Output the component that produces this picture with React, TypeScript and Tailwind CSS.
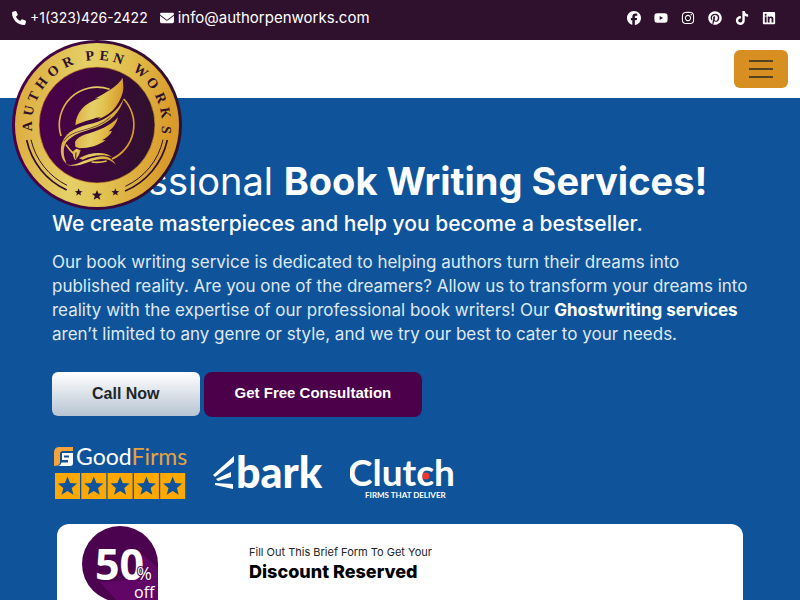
import type { IconType } from 'react-icons';
import {
  FaEnvelope,
  FaFacebook,
  FaInstagram,
  FaLinkedin,
  FaPhone,
  FaPinterest,
  FaTiktok,
  FaYoutube,
} from 'react-icons/fa6';

interface Social {
  name: string;
  icon: IconType;
}

const socials: Social[] = [
  { name: 'Facebook', icon: FaFacebook },
  { name: 'YouTube', icon: FaYoutube },
  { name: 'Instagram', icon: FaInstagram },
  { name: 'Pinterest', icon: FaPinterest },
  { name: 'TikTok', icon: FaTiktok },
  { name: 'LinkedIn', icon: FaLinkedin },
];

// letters around the seal, angle in degrees from the top
const sealLetters: [string, number][] = [
  ['A', -91], ['U', -78], ['T', -66], ['H', -53], ['O', -39], ['R', -25],
  ['P', -6], ['E', 6], ['N', 18],
  ['W', 39], ['O', 53], ['R', 67], ['K', 80], ['S', 94],
];

const STAR = 'M0 -10 L2.6 -3.4 L9.6 -3 L4.2 1.4 L6 8.2 L0 4.4 L-6 8.2 L-4.2 1.4 L-9.6 -3 L-2.6 -3.4 Z';

function SealLogo() {
  return (
    <svg viewBox="36 30 510 510" className="block h-[170px] w-[170px]" role="img" aria-label="Author Pen Works">
      <defs>
        <linearGradient id="gold" x1="0" y1="0" x2="1" y2="0.15">
          <stop offset="0" stopColor="#dca638" />
          <stop offset="0.45" stopColor="#e5d068" />
          <stop offset="0.65" stopColor="#e2c453" />
          <stop offset="1" stopColor="#d99b2b" />
        </linearGradient>
        <linearGradient id="plum" x1="0" y1="0" x2="1" y2="0">
          <stop offset="0" stopColor="#4b0049" />
          <stop offset="1" stopColor="#2f112d" />
        </linearGradient>
      </defs>
      <circle cx="291" cy="285" r="255" fill="url(#plum)" />
      <circle cx="291" cy="285" r="246" fill="url(#gold)" />
      <circle cx="291" cy="285" r="174" fill="url(#plum)" stroke="#d99b2b" strokeWidth="2" />

      <g fill="#2f112d" fontFamily="'Liberation Serif', serif" fontWeight="700" fontSize="42" textAnchor="middle">
        {sealLetters.map(([letter, angle]) => (
          <text key={angle} x="291" y="90" transform={`rotate(${angle} 291 285)`}>
            {letter}
          </text>
        ))}
      </g>

      <g fill="none" stroke="#2f112d">
        <path d="M80 330 A216 216 0 0 0 200 480" strokeWidth="5" />
        <path d="M93 329 A203 203 0 0 0 201 466" strokeWidth="3" />
        <path d="M502 330 A216 216 0 0 1 375 483" strokeWidth="5" />
        <path d="M489 329 A203 203 0 0 1 376 469" strokeWidth="3" />
      </g>
      <g fill="#2f112d">
        <path d={STAR} transform="translate(236 487) scale(1.2)" />
        <path d={STAR} transform="translate(291 496) scale(1.6)" />
        <path d={STAR} transform="translate(346 487) scale(1.2)" />
      </g>

      {/* ring, open behind the quill */}
      <path d="M329 178 A113 113 0 0 0 183 318 M198 344 A113 113 0 0 0 222 372 M275 396 A113 113 0 0 0 320 393 M336 387 A113 113 0 0 0 371 207" fill="none" stroke="url(#gold)" strokeWidth="5" />
      <g fill="url(#gold)">
        <path d="M368 143 C350 172 318 187 284 206 L300 203 C254 219 228 246 226 286 C246 274 270 271 288 263 L302 262 L293 268 C316 260 336 247 349 228 C361 211 370 190 370 172 Z" />
        <path d="M371 206 C354 240 325 266 280 280 C234 290 201 302 186 338 C178 364 184 389 200 401 C189 377 188 354 199 337 C217 312 252 304 286 293 C330 277 362 245 371 206 Z" />
        <path d="M354 262 C330 290 292 303 257 313 C241 319 230 326 225 336 L226 350 L238 355 C268 355 297 346 317 331 L306 331 C321 323 331 314 336 303 L326 304 C342 293 350 278 354 262 Z" />
        <path d="M220 363 L229 356 L242 361 L237 375 L226 391 C219 382 217 372 220 363 Z" />
        <path d="M184 379 C188 404 206 411 235 400 C267 387 308 369 332 386 C340 392 343 396 348 404 C327 383 302 383 269 395 C229 410 190 418 184 379 Z" />
        <path d="M237 385 C270 365 318 363 337 382 C307 371 276 376 248 389 Z" />
      </g>
      <path d="M191 334 C217 293 280 309 332 261" fill="none" stroke="#3c0a3a" strokeWidth="2" />
      <path d="M228 367 L227 386" stroke="#3c0a3a" strokeWidth="3" />
    </svg>
  );
}

function GoodFirmsLogo() {
  return (
    <svg viewBox="0 0 134 54" className="block h-[54px] w-[134px]" role="img" aria-label="GoodFirms, five stars">
      <path d="M5 1 H19 V5 H9 Q6 5 6 8 V17 Q5 20 0 20 V7 Q0 1 5 1 Z" fill="#f6a33a" />
      <path d="M8 7 H19 V17 Q19 20 16 20 H4 Q7 19 8 16 Z" fill="#fff" />
      <path d="M10 9.5 H15 V11.5 H10 Z M8 14 H14 V16.500 H8 Z" fill="#0f549b" />
      <text x="22" y="19" fontFamily="Lato, sans-serif" fontSize="23" fill="#fff">
        Good<tspan fill="#e9a23c">Firms</tspan>
      </text>
      {[0, 1, 2, 3, 4].map((i) => (
        <g key={i} transform={`translate(${1 + i * 26.3} 27)`}>
          <rect width="25" height="26" fill="#ffa800" />
          <path d={STAR} transform="translate(12.5 13.5)" fill="#0f549b" />
        </g>
      ))}
    </svg>
  );
}

function BarkLogo() {
  return (
    <svg viewBox="0 0 112 56" className="block h-14 w-[112px]" role="img" aria-label="bark">
      <g fill="#fff">
        <path d="M0 30 L21 11 V17 L2 32 Z" />
        <path d="M3 34 L18 27 V32 L5 36 Z" />
        <path d="M2 38 L20 39 V44 L2 40 Z" />
        <text x="23" y="43" fontFamily="Lato, sans-serif" fontWeight="900" fontSize="43">bark</text>
      </g>
    </svg>
  );
}

function ClutchLogo() {
  return (
    <svg viewBox="0 0 108 60" className="block h-[60px] w-[108px]" role="img" aria-label="Clutch, firms that deliver">
      <text x="-2" y="43" fontFamily="Lato, sans-serif" fontWeight="700" fontSize="37" fill="#fff">Clutch</text>
      <circle cx="76" cy="33" r="3.500" fill="#f0392b" />
      <text x="15" y="55" fontFamily="Lato, sans-serif" fontWeight="700" fontSize="8" fill="#fff">FIRMS THAT DELIVER</text>
    </svg>
  );
}

function DiscountBadge() {
  return (
    <svg viewBox="0 0 76 76" className="block h-[76px] w-[76px]" role="img" aria-label="50% off">
      <path d="M38 0 A38 38 0 0 1 76 38 V76 H38 A38 38 0 0 1 38 0 Z" fill="#4c034f" />
      <path d="M60 28 L76 42 V76 H36 L18 56 L50 54 Z" fill="#700878" opacity="0.6" />
      <g fill="#fff" fontFamily="'Open Sans', sans-serif">
        <text x="13" y="54" fontSize="43" fontWeight="700">50</text>
        <text x="55" y="54" fontSize="18" fontWeight="400" stroke="#4c034f" strokeWidth="2" paintOrder="stroke">%</text>
        <text x="52" y="72" fontSize="16" fontWeight="500">off</text>
      </g>
    </svg>
  );
}

function App() {
  return (
    <div className="flex min-h-screen flex-col bg-[#0f549b] font-[Inter,sans-serif]">
      <div className="flex h-10 items-center justify-between bg-[#2f112d] pr-6 pb-1 pl-3 text-white">
        <div className="flex items-center gap-3">
          <a href="tel:+13234262422" className="flex items-center gap-1 text-sm">
            <FaPhone />
            +1(323)426-2422
          </a>
          <a href="mailto:info@authorpenworks.com" className="flex items-center gap-1 text-[15px]">
            <FaEnvelope className="text-sm" />
            info@authorpenworks.com
          </a>
        </div>
        <div className="flex items-center gap-[13px] text-sm">
          {socials.map(({ name, icon: Icon }) => (
            <a key={name} href="#" aria-label={name}>
              <Icon className="h-[14px] w-auto" />
            </a>
          ))}
        </div>
      </div>

      <header className="relative flex h-[58px] items-center justify-end bg-white px-3">
        <a href="#" className="absolute top-0 left-3 z-10">
          <SealLogo />
        </a>
        <button
          type="button"
          aria-label="Toggle navigation"
          className="flex h-[38px] w-[54px] flex-col items-center justify-center gap-[6px] rounded-md bg-[#d68f20]"
        >
          <span className="h-[2px] w-6 bg-[#54431f]"></span>
          <span className="h-[2px] w-6 bg-[#54431f]"></span>
          <span className="h-[2px] w-6 bg-[#54431f]"></span>
        </button>
      </header>

      <main className="flex flex-1 flex-col px-[52px] pt-[60px] text-white">
        <h1 className="text-[38px] leading-[46px] whitespace-nowrap">
          Professional <strong className="font-bold">Book Writing Services!</strong>
        </h1>
        <h2 className="mt-2 text-[21px] leading-6 font-medium">
          We create masterpieces and help you become a bestseller.
        </h2>
        <p className="mt-[14px] text-[17px] leading-6 whitespace-nowrap text-[#dfe8f1]">
          Our book writing service is dedicated to helping authors turn their dreams into
          <br />
          published reality. Are you one of the dreamers? Allow us to transform your dreams into
          <br />
          reality with the expertise of our professional book writers! Our{' '}
          <strong className="font-bold text-white">Ghostwriting services</strong>
          <br />
          aren’t limited to any genre or style, and we try our best to cater to your needs.
        </p>

        <div className="mt-[26px] flex items-start gap-1 font-['Liberation_Sans',sans-serif] font-bold">
          <button
            type="button"
            className="h-11 rounded-md bg-linear-to-b from-white to-[#b8c5d3] px-10 text-base text-[#212529]"
          >
            Call Now
          </button>
          <button type="button" className="h-[45px] rounded-lg bg-[#4b0049] px-[31px] pb-[2px] text-[15px] text-white">
            Get Free Consultation
          </button>
        </div>

        <div className="mt-[26px] flex items-center gap-[25px] pl-[2px]">
          <GoodFirmsLogo />
          <BarkLogo />
          <ClutchLogo />
        </div>

        <section className="mx-[5px] mt-[21px] flex flex-1 gap-[91px] rounded-t-xl bg-white pl-[25px] text-black">
          <div className="h-[76px] overflow-hidden pt-[2px]">
            <DiscountBadge />
          </div>
          <div className="pt-5">
            <p className="text-[11px] leading-4 text-[#212529]">Fill Out This Brief Form To Get Your</p>
            <h3 className="text-lg leading-6 font-extrabold">Discount Reserved</h3>
          </div>
        </section>
      </main>
    </div>
  );
}

export default App;
